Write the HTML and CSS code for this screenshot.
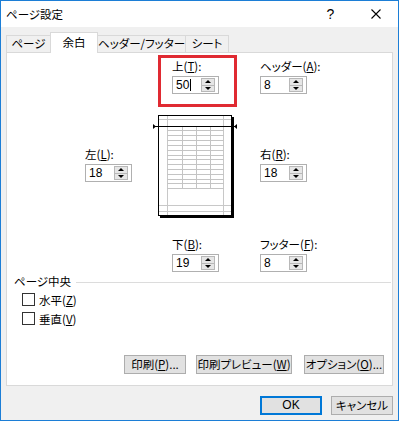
FILE: index.html
```html
<!DOCTYPE html>
<html lang="ja">
<head>
    <meta charset="UTF-8">
    <meta name="viewport" content="width=device-width, initial-scale=1.0">
    <title>ページ設定</title>
    <link rel="stylesheet" href="styles.css">
</head>
<body>

    <div class="window">
        <div class="titlebar">
            <span class="title">ページ設定</span>
            <span class="caption-btn help">?</span>
            <span class="caption-btn">
                <svg width="10" height="10" viewBox="0 0 10 10"><path d="M0.5 0.5 L9.5 9.5 M9.5 0.5 L0.5 9.5" stroke="#000" stroke-width="1.1" fill="none"/></svg>
            </span>
        </div>

        <div class="content">
            <div class="tabs">
                <div class="tab tab-page">ページ</div>
                <div class="tab tab-margin active">余白</div>
                <div class="tab tab-header">ヘッダー/フッター</div>
                <div class="tab tab-sheet">シート</div>
            </div>

            <div class="panel">
                <!-- 余白の入力欄とプレビュー -->
                <div class="margins">
                    <div class="field top-field">
                        <div class="label">上(<u>T</u>):</div>
                        <div class="spin-box"><span class="value">50<span class="caret"></span></span><span class="spin"><span class="up"></span><span class="down"></span></span></div>
                    </div>
                    <div class="field header-field">
                        <div class="label">ヘッダー(<u>A</u>):</div>
                        <div class="spin-box"><span class="value">8</span><span class="spin"><span class="up"></span><span class="down"></span></span></div>
                    </div>

                    <div class="field left-field">
                        <div class="label">左(<u>L</u>):</div>
                        <div class="spin-box"><span class="value">18</span><span class="spin"><span class="up"></span><span class="down"></span></span></div>
                    </div>
                    <div class="preview">
                        <svg width="85" height="106" viewBox="0 0 85 106">
                            <rect x="5" y="0" width="74" height="101" fill="#fff"/>
                            <g stroke="#c8c8c8" stroke-width="1">
                                <path d="M14.5 1 V100 M70.5 1 V100 M6 4.5 H78 M6 90.5 H78 M6 96.5 H78"/>
                            </g>
                            <g stroke="#c4c4c4" stroke-width="1" fill="none">
                                <path d="M29.5 11 V73 M43.5 11 V73 M57.5 11 V73"/>
                                <path d="M14 15.5 H71 M14 20.5 H71 M14 25.5 H71 M14 30.5 H71 M14 35.5 H71 M14 40.5 H71 M14 44.5 H71 M14 49.5 H71 M14 54.5 H71 M14 59.5 H71 M14 64.5 H71 M14 68.5 H71 M14 73.5 H71"/>
                            </g>
                            <rect x="5.5" y="0.5" width="73" height="100" fill="none" stroke="#000" stroke-width="1"/>
                            <rect x="79" y="2" width="2" height="101" fill="#000"/>
                            <rect x="7" y="101" width="74" height="2" fill="#000"/>
                            <path d="M2 11.5 H82" stroke="#000" stroke-width="1"/>
                            <path d="M0 9 L3 11.5 L0 14 Z" fill="#000"/>
                            <path d="M84 9 L81 11.5 L84 14 Z" fill="#000"/>
                        </svg>
                    </div>
                    <div class="field right-field">
                        <div class="label">右(<u>R</u>):</div>
                        <div class="spin-box"><span class="value">18</span><span class="spin"><span class="up"></span><span class="down"></span></span></div>
                    </div>

                    <div class="field bottom-field">
                        <div class="label">下(<u>B</u>):</div>
                        <div class="spin-box"><span class="value">19</span><span class="spin"><span class="up"></span><span class="down"></span></span></div>
                    </div>
                    <div class="field footer-field">
                        <div class="label">フッター(<u>F</u>):</div>
                        <div class="spin-box"><span class="value">8</span><span class="spin"><span class="up"></span><span class="down"></span></span></div>
                    </div>
                </div>

                <div class="group-title">ページ中央</div>
                <label class="check"><span class="box"></span>水平(<u>Z</u>)</label>
                <label class="check"><span class="box"></span>垂直(<u>V</u>)</label>

                <div class="panel-buttons">
                    <button class="btn btn-print">印刷(<u>P</u>)...</button>
                    <button class="btn btn-preview">印刷プレビュー(<u>W</u>)</button>
                    <button class="btn btn-option">オプション(<u>O</u>)...</button>
                </div>
            </div>

            <div class="footer">
                <button class="btn btn-ok">OK</button>
                <button class="btn btn-cancel">キャンセル</button>
            </div>
        </div>
    </div>

</body>
</html>
```

FILE: styles.css
```css
body {
    margin: 0;
    font-family: "Noto Sans CJK JP", "Noto Sans", sans-serif;
    font-size: 11.5px;
    font-feature-settings: "palt";
    color: #000;
    background: #fff;
}
u {
    text-decoration: underline;
    text-underline-offset: 1px;
}
.window {
    width: 399px;
    height: 421px;
    box-sizing: border-box;
    border: 1px solid #1c7ed6;
    background-color: #f0f0f0;
    display: flex;
    flex-direction: column;
}
.titlebar {
    height: 26px;
    background-color: #fff;
    display: flex;
    align-items: center;
    flex-shrink: 0;
}
.title {
    flex: 1;
    padding-left: 5px;
    line-height: 15px;
}
.caption-btn {
    width: 45px;
    height: 26px;
    display: flex;
    align-items: center;
    justify-content: center;
}
.help {
    font-family: "Liberation Sans", sans-serif;
    font-size: 14px;
    padding-left: 2px;
}
.content {
    flex: 1;
    display: flex;
    flex-direction: column;
    padding: 0 5px;
}
/* Tabs */
.tabs {
    height: 25px;
    display: flex;
    align-items: flex-end;
    flex-shrink: 0;
}
.tab {
    box-sizing: border-box;
    height: 17px;
    border: 1px solid #d9d9d9;
    border-bottom: none;
    margin-right: -1px;
    background-color: #f0f0f0;
    text-align: center;
    line-height: 15px;
    white-space: nowrap;
}
.tab.active {
    height: 21px;
    margin-bottom: -1px;
    background-color: #fff;
    position: relative;
    z-index: 1;
    line-height: 19px;
}
.tab-page { width: 45px; }
.tab-margin { width: 48px; }
.tab-header { width: 89px; }
.tab-sheet { width: 44px; }
/* Panel */
.panel {
    height: 334px;
    box-sizing: border-box;
    border: 1px solid #d9d9d9;
    background-color: #fff;
    display: flex;
    flex-direction: column;
}
.margins {
    display: grid;
    grid-template-columns: 73px 102px 47px;
    grid-template-rows: 52px 130px auto;
    padding: 2px 0 0 78px;
}
.field {
    display: flex;
    flex-direction: column;
    align-items: flex-start;
}
.label {
    line-height: 15px;
    height: 15px;
    margin-bottom: 2px;
    white-space: nowrap;
}
.top-field {
    grid-column: 2;
    grid-row: 1;
    width: 79px;
    box-sizing: border-box;
    border: 3px solid #e02a32;
    padding: 1px 0 0 11px;
}
.header-field {
    grid-column: 3;
    grid-row: 1;
    padding-top: 4px;
}
.left-field {
    grid-column: 1;
    grid-row: 2;
    margin-top: 40px;
}
.preview {
    grid-column: 2;
    grid-row: 2;
    margin: 8px 0 0 -5px;
}
.preview svg {
    display: block;
}
.right-field {
    grid-column: 3;
    grid-row: 2;
    margin-top: 40px;
}
.bottom-field {
    grid-column: 2;
    grid-row: 3;
    padding-left: 14px;
}
.footer-field {
    grid-column: 3;
    grid-row: 3;
}
.spin-box {
    width: 47px;
    height: 18px;
    box-sizing: border-box;
    border: 1px solid #b0b0b0;
    background-color: #fff;
    display: flex;
    align-items: center;
    justify-content: space-between;
    padding: 1px 3px 1px 3px;
}
.value {
    font-family: "Liberation Sans", sans-serif;
    font-size: 12px;
    line-height: 13px;
    display: flex;
    align-items: center;
}
.caret {
    display: inline-block;
    width: 1px;
    height: 12px;
    background-color: #000;
    margin-left: 1px;
}
.spin {
    width: 14px;
    height: 14px;
    box-sizing: border-box;
    border: 1px solid #b8b8b8;
    background-color: #e6e6e6;
    display: flex;
    flex-direction: column;
}
.spin .up, .spin .down {
    flex: 1;
    display: flex;
    align-items: center;
    justify-content: center;
}
.spin .up {
    border-bottom: 1px solid #b8b8b8;
}
.spin .up::before {
    content: "";
    border-left: 3px solid transparent;
    border-right: 3px solid transparent;
    border-bottom: 3px solid #000;
}
.spin .down::before {
    content: "";
    border-left: 3px solid transparent;
    border-right: 3px solid transparent;
    border-top: 3px solid #000;
}
/* ページ中央 */
.group-title {
    display: flex;
    align-items: center;
    margin-top: 2px;
    padding-left: 7px;
    line-height: 15px;
}
.group-title::after {
    content: "";
    flex: 1;
    height: 1px;
    background-color: #dcdcdc;
    margin: 1px 1px 0 5px;
}
.check {
    display: flex;
    align-items: center;
    height: 19px;
    padding-left: 15px;
}
.check:first-of-type {
    margin-top: 1px;
}
.check .box {
    width: 13px;
    height: 13px;
    box-sizing: border-box;
    border: 1px solid #333;
    background-color: #fff;
    margin-right: 4px;
}
/* Buttons */
.panel-buttons {
    margin-top: auto;
    display: flex;
    justify-content: flex-end;
    gap: 10px;
    padding: 0 8px 11px 0;
}
.btn {
    font-family: "Noto Sans CJK JP", "Noto Sans", sans-serif;
    font-size: 11.5px;
    font-feature-settings: "palt";
    color: #000;
    height: 19px;
    box-sizing: border-box;
    padding: 0;
    line-height: 15px;
    white-space: nowrap;
    background-color: #e1e1e1;
    border: 1px solid #adadad;
    border-radius: 0;
}
.btn-print { width: 62px; }
.btn-preview { width: 96px; margin-right: 2px; }
.btn-option { width: 80px; }
.footer {
    display: flex;
    justify-content: flex-end;
    gap: 9px;
    padding-top: 10px;
}
.btn-ok, .btn-cancel {
    width: 62px;
}
.btn-ok {
    border-color: #0078d7;
    box-shadow: inset 0 0 0 1px #0078d7;
    font-family: "Liberation Sans", sans-serif;
    font-size: 12px;
}
```
